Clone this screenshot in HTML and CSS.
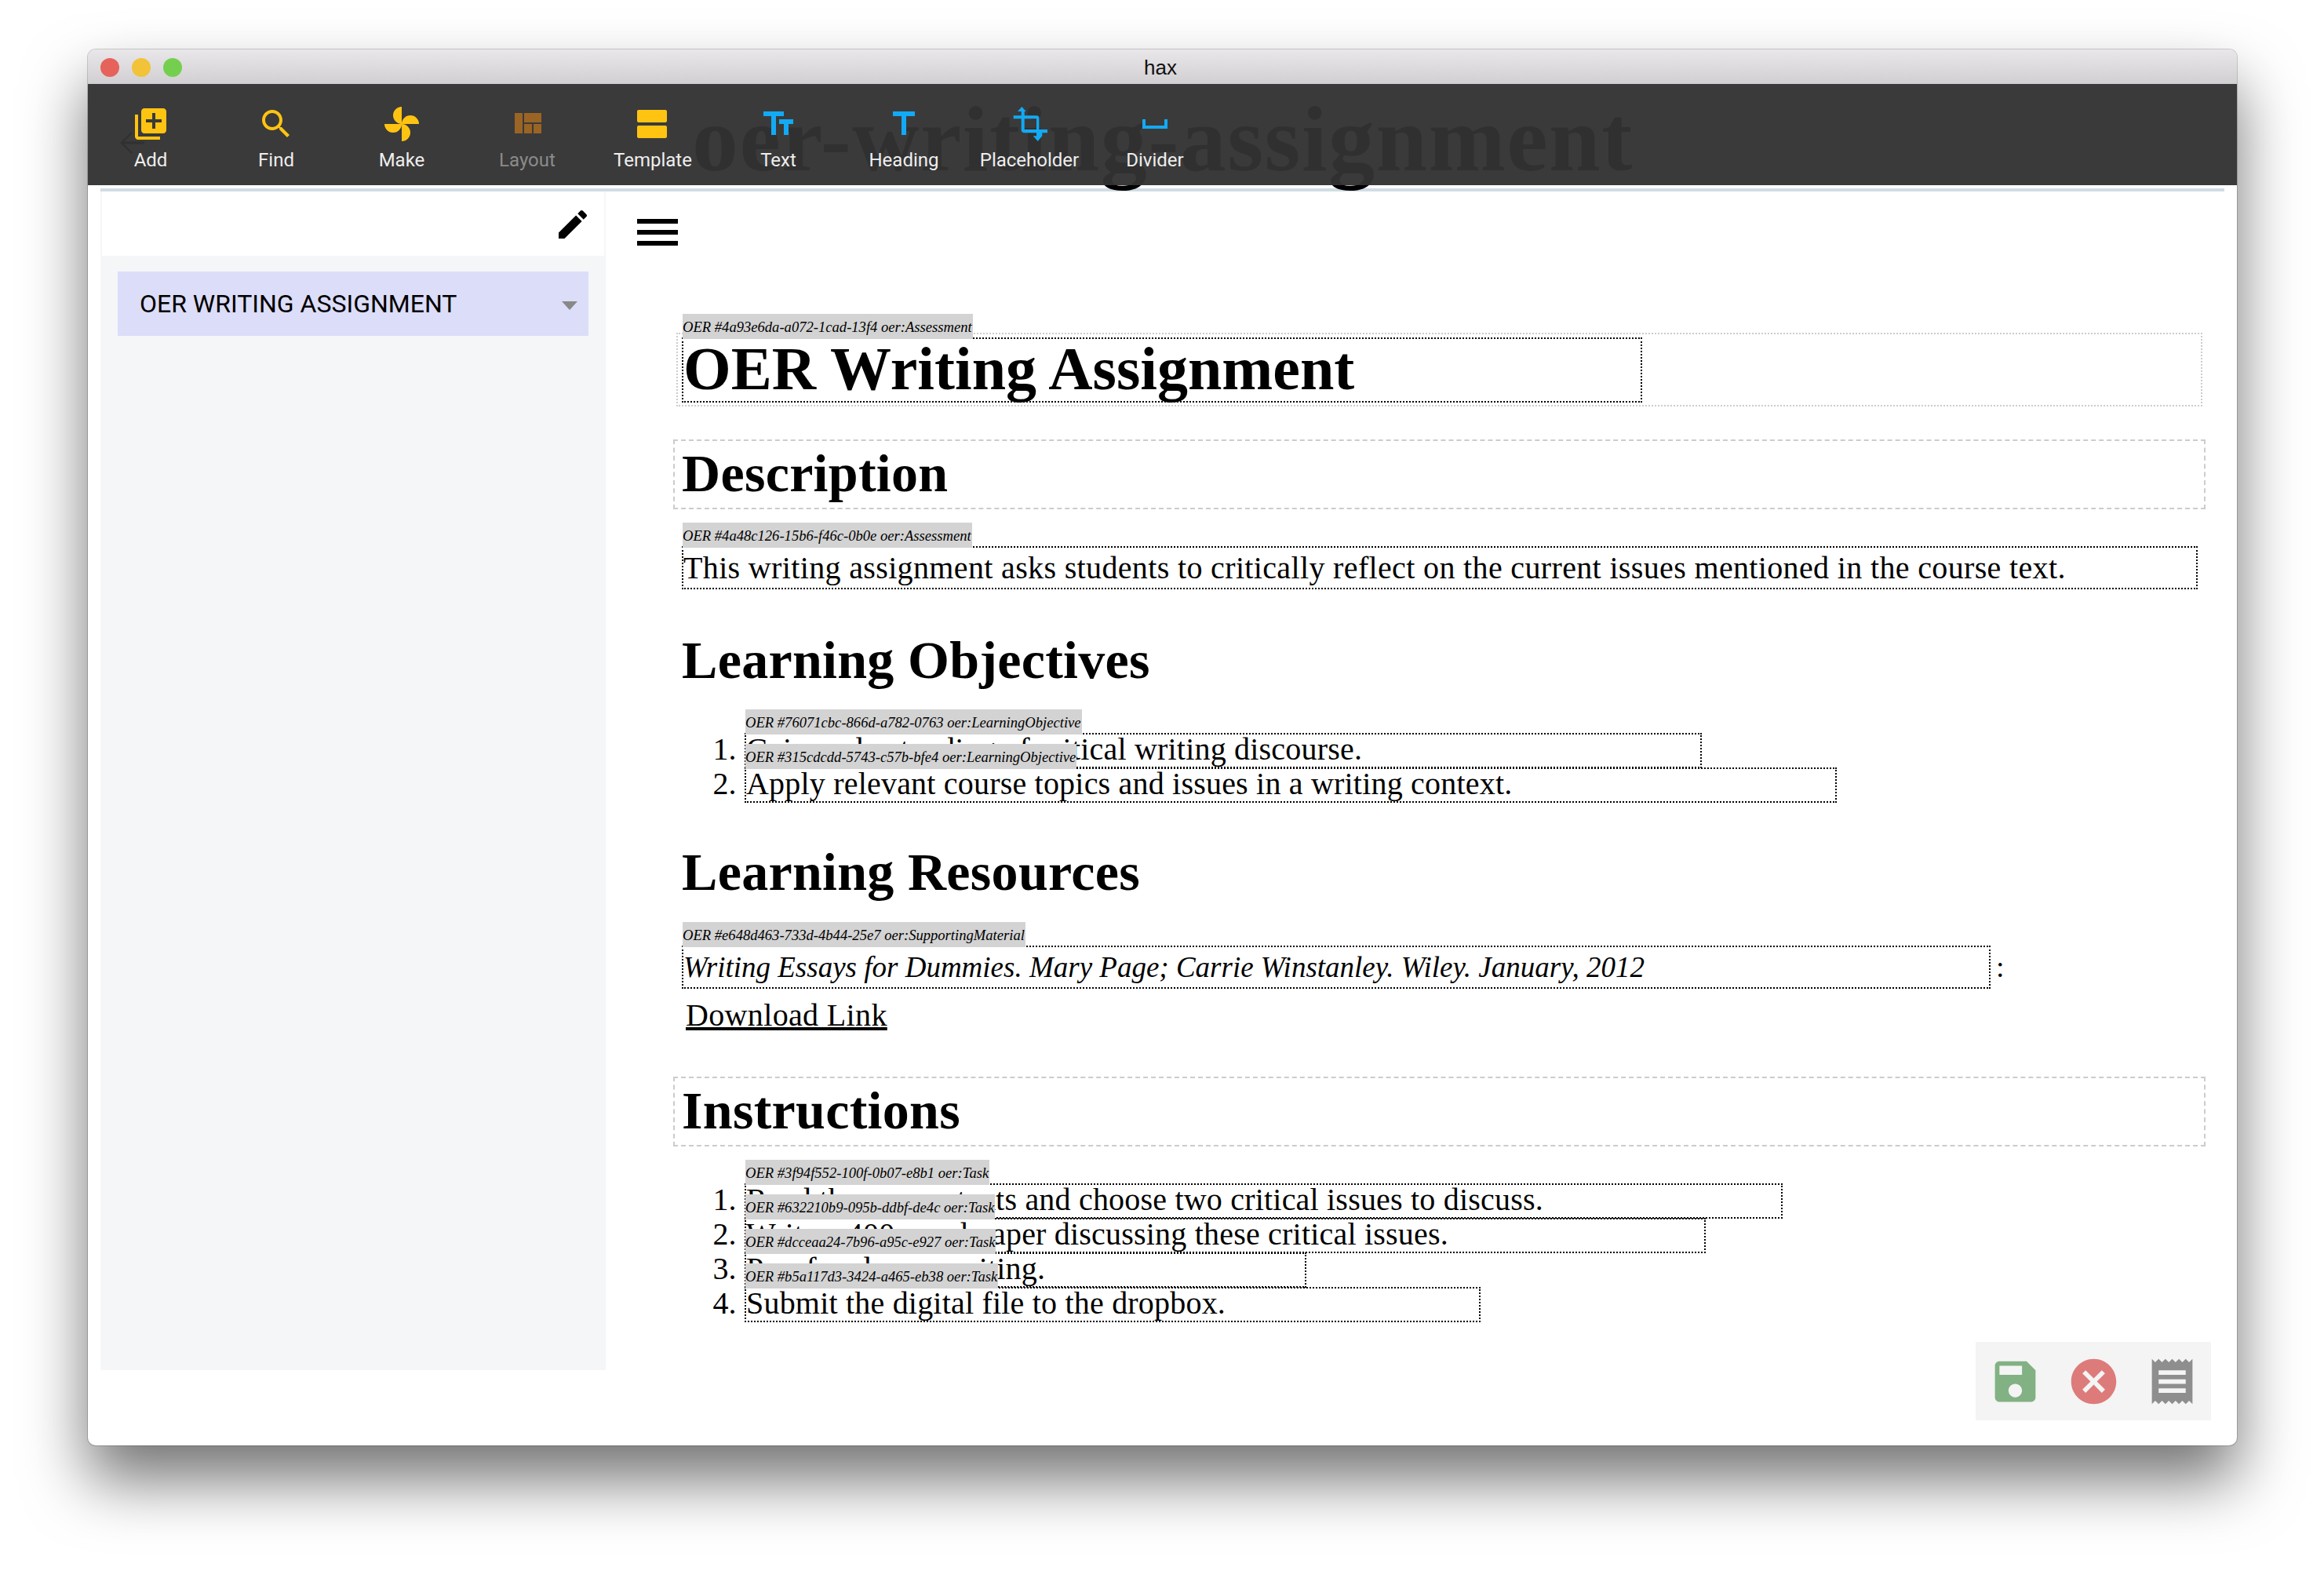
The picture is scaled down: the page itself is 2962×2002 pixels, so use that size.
FILE: index.html
```
<!DOCTYPE html>
<html>
<head>
  <meta charset="utf-8">
  <title>hax</title>
  <link rel="stylesheet" href="styles.css">
</head>
<body>
  <div class="window">
    <div class="titlebar">
      <div class="lights">
        <span class="light red"></span>
        <span class="light yellow"></span>
        <span class="light green"></span>
      </div>
      <span class="window-title">hax</span>
    </div>

    <!-- page title sits behind the translucent toolbar -->
    <div class="back-title">oer-writing-assignment</div>
    <svg class="back-arrow" viewBox="0 0 32 32"><path d="M32 14.5H6L17 3.5 15.5 2 1 16l14.5 14 1.5-1.5-11-11h26z"/></svg>

    <div class="toolbar">
      <div class="tool yellow-icon">
        <svg viewBox="0 0 24 24"><path d="M4 6H2v14c0 1.1.9 2 2 2h14v-2H4V6zm16-4H8c-1.1 0-2 .9-2 2v12c0 1.1.9 2 2 2h12c1.1 0 2-.9 2-2V4c0-1.1-.9-2-2-2zm-1 9h-4v4h-2v-4H9V9h4V5h2v4h4v2z"/></svg>
        <span>Add</span>
      </div>
      <div class="tool yellow-icon">
        <svg viewBox="0 0 24 24"><path d="M15.5 14h-.79l-.28-.27C15.41 12.59 16 11.11 16 9.5 16 5.91 13.09 3 9.5 3S3 5.91 3 9.5 5.91 16 9.5 16c1.61 0 3.09-.59 4.23-1.57l.27.28v.79l5 4.99L20.49 19l-4.99-5zm-6 0C7.01 14 5 11.99 5 9.5S7.01 5 9.5 5 14 7.01 14 9.5 11.99 14 9.5 14z"/></svg>
        <span>Find</span>
      </div>
      <div class="tool yellow-icon">
        <svg viewBox="0 0 48 48"><path d="M24 24V2A11 11 0 0 0 24 24zM24 24H46A11 11 0 0 0 24 24zM24 24V46A11 11 0 0 0 24 24zM24 24H2A11 11 0 0 0 24 24z"/></svg>
        <span>Make</span>
      </div>
      <div class="tool yellow-icon disabled">
        <svg viewBox="0 0 24 24"><path d="M10 18h5v-6h-5v6zm-6 0h5V5H4v13zm12 0h5v-6h-5v6zM10 5v6h11V5H10z"/></svg>
        <span>Layout</span>
      </div>
      <div class="tool yellow-icon">
        <svg viewBox="0 0 24 24"><path d="M20 13H3c-.55 0-1 .45-1 1v6c0 .55.45 1 1 1h17c.55 0 1-.45 1-1v-6c0-.55-.45-1-1-1zm0-10H3c-.55 0-1 .45-1 1v6c0 .55.45 1 1 1h17c.55 0 1-.45 1-1V4c0-.55-.45-1-1-1z"/></svg>
        <span>Template</span>
      </div>
      <div class="tool blue-icon">
        <svg viewBox="0 0 48 48"><path d="M5 8h26v6H21v24h-6V14H5zM25 18h18v6h-6v14h-6V24h-6z"/></svg>
        <span>Text</span>
      </div>
      <div class="tool blue-icon">
        <svg viewBox="0 0 24 24"><path d="M5 4v3h5.5v12h3V7H19V4z"/></svg>
        <span>Heading</span>
      </div>
      <div class="tool blue-icon">
        <svg viewBox="0 0 48 48"><path d="M14.300 2l5.400 6h-2v5.300H33a3.300 3.300 0 0 1 3.300 3.300V31H47v4.300H40.300v4h-0l-5.600 6.700-6-6.700h4.300V35.300H17.700a4 4 0 0 1-4-4V17.300H3.700v-4h10V8H9zM17.700 17.300V31H33V17.300z"/></svg>
        <span>Placeholder</span>
      </div>
      <div class="tool blue-icon">
        <svg viewBox="0 0 24 24"><path d="M18 9v4H6V9H4v6h16V9z"/></svg>
        <span>Divider</span>
      </div>
    </div>

    <div class="rule"></div>

    <div class="workspace">
      <div class="sidebar">
        <div class="sidebar-head">
          <svg class="pencil" viewBox="0 0 24 24"><path d="M3 17.250V21h3.750L17.810 9.940l-3.750-3.750L3 17.250zM20.710 7.040c.39-.39.39-1.020 0-1.410l-2.340-2.340c-.39-.39-1.020-.39-1.410 0l-1.830 1.830 3.750 3.750 1.830-1.830z"/></svg>
        </div>
        <div class="nav-item">
          <span>OER WRITING ASSIGNMENT</span>
          <span class="caret"></span>
        </div>
      </div>

      <div class="main">
        <div class="hamburger"><span></span><span></span><span></span></div>

        <div class="doc">
          <div class="title-wrap">
            <h1 class="oer-box title-box">
              <span class="oer-tag">OER #4a93e6da-a072-1cad-13f4 oer:Assessment</span>
              OER Writing Assignment
            </h1>
          </div>

          <h2 class="dashed">Description</h2>

          <p class="oer-box para-box">
            <span class="oer-tag">OER #4a48c126-15b6-f46c-0b0e oer:Assessment</span>
            This writing assignment asks students to critically reflect on the current issues mentioned in the course text.
          </p>

          <h2 class="plain objectives">Learning Objectives</h2>

          <ol class="oer-list objectives-list">
            <li><div class="oer-box item-box w1"><span class="oer-tag">OER #76071cbc-866d-a782-0763 oer:LearningObjective</span>Gain understanding of critical writing discourse.</div></li>
            <li><div class="oer-box item-box w2"><span class="oer-tag">OER #315cdcdd-5743-c57b-bfe4 oer:LearningObjective</span>Apply relevant course topics and issues in a writing context.</div></li>
          </ol>

          <h2 class="plain resources">Learning Resources</h2>

          <div class="resource-row">
            <div class="oer-box para-box book-box">
              <span class="oer-tag">OER #e648d463-733d-4b44-25e7 oer:SupportingMaterial</span>
              <em>Writing Essays for Dummies. Mary Page; Carrie Winstanley. Wiley. January, 2012</em>
            </div>
            <span class="colon">:</span>
          </div>
          <a class="download" href="#">Download Link</a>

          <h2 class="dashed instructions">Instructions</h2>

          <ol class="oer-list tasks-list">
            <li><div class="oer-box item-box w3"><span class="oer-tag">OER #3f94f552-100f-0b07-e8b1 oer:Task</span>Read the course texts and choose two critical issues to discuss.</div></li>
            <li><div class="oer-box item-box w4"><span class="oer-tag">OER #632210b9-095b-ddbf-de4c oer:Task</span>Write a 400 word paper discussing these critical issues.</div></li>
            <li><div class="oer-box item-box w5"><span class="oer-tag">OER #dcceaa24-7b96-a95c-e927 oer:Task</span>Proofread your writing.</div></li>
            <li><div class="oer-box item-box w6"><span class="oer-tag">OER #b5a117d3-3424-a465-eb38 oer:Task</span>Submit the digital file to the dropbox.</div></li>
          </ol>
        </div>
      </div>
    </div>

    <div class="actions">
      <svg class="save" viewBox="0 0 24 24"><path d="M17 3H5c-1.110 0-2 .9-2 2v14c0 1.100.89 2 2 2h14c1.100 0 2-.9 2-2V7l-4-4zm-5 16c-1.660 0-3-1.340-3-3s1.340-3 3-3 3 1.340 3 3-1.340 3-3 3zm3-10H5V5h10v4z"/></svg>
      <svg class="cancel" viewBox="0 0 24 24"><path d="M12 2C6.470 2 2 6.470 2 12s4.470 10 10 10 10-4.470 10-10S17.530 2 12 2zm5 13.590L15.590 17 12 13.410 8.410 17 7 15.590 10.590 12 7 8.410 8.410 7 12 10.590 15.590 7 17 8.410 13.410 12 17 15.590z"/></svg>
      <svg class="source" viewBox="0 0 24 24"><path d="M18 17H6v-2h12v2zm0-4H6v-2h12v2zm0-4H6V7h12v2zM3 22l1.500-1.500L6 22l1.500-1.500L9 22l1.500-1.500L12 22l1.500-1.500L15 22l1.500-1.500L18 22l1.500-1.500L21 22V2l-1.500 1.500L18 2l-1.500 1.500L15 2l-1.500 1.500L12 2l-1.500 1.500L9 2 7.500 3.500 6 2 4.500 3.500 3 2v20z"/></svg>
    </div>
  </div>
</body>
</html>
```

FILE: styles.css
```
html, body {
  margin: 0;
  padding: 0;
  background-color: white;
}

body {
  height: 2002px;
  overflow: hidden;
  font-family: "Liberation Serif", serif;
  color: black;
}

/* Window frame */
.window {
  position: relative;
  box-sizing: border-box;
  width: 2739px;
  height: 1779px;
  margin: 63px 0 0 112px;
  background-color: white;
  border-radius: 10px;
  box-shadow: 0 0 0 1px rgba(0, 0, 0, 0.18), 0 44px 80px rgba(0, 0, 0, 0.55);
  overflow: visible;
}

.titlebar {
  position: relative;
  z-index: 3;
  box-sizing: border-box;
  display: flex;
  align-items: center;
  justify-content: center;
  height: 44px;
  padding: 2px 5px 0 0;
  border-radius: 10px 10px 0 0;
  background: linear-gradient(#e9e7e9, #d1cfd1);
  font-family: "Liberation Sans", sans-serif;
  font-size: 26px;
  color: #111;
}

.lights {
  position: absolute;
  left: 16px;
  top: 11px;
  display: flex;
  gap: 16px;
}

.light {
  width: 24px;
  height: 24px;
  border-radius: 50%;
}

.red { background-color: #e5635b; }
.yellow { background-color: #f2c238; }
.green { background-color: #75cf4e; }

.back-title {
  position: absolute;
  left: 770px;
  top: 56px;
  font-size: 118px;
  line-height: 118px;
  font-weight: bold;
  letter-spacing: 1.4px;
  white-space: nowrap;
}

.back-arrow {
  position: absolute;
  left: 40px;
  top: 103px;
  width: 32px;
  height: 32px;
}

/* Toolbar */
.toolbar {
  position: relative;
  z-index: 2;
  display: flex;
  height: 129px;
  background-color: rgba(50, 50, 50, 0.96);
}

.tool {
  display: flex;
  flex-direction: column;
  align-items: center;
  width: 160px;
  padding-top: 27px;
  font-family: Roboto, sans-serif;
  font-size: 24px;
  line-height: 28px;
  color: #eee;
}

.tool svg {
  width: 48px;
  height: 48px;
  margin-bottom: 8px;
}

.yellow-icon svg { fill: #ffc412; }
.blue-icon svg { fill: #12aaf5; }
.disabled svg { fill: #9a6425; }
.disabled { color: #8b8b8b; }

.rule {
  height: 4px;
  margin: 4px 16px 0;
  background-color: #d1dce4;
}

/* Sidebar + document */
.workspace {
  display: flex;
  padding: 0 16px;
}

.sidebar {
  box-sizing: border-box;
  width: 644px;
  height: 1502px;
  padding: 0 2px;
  background-color: #f5f6f8;
}

.sidebar-head {
  display: flex;
  justify-content: flex-end;
  height: 82px;
  background-color: white;
}

.pencil {
  width: 48px;
  height: 48px;
  margin: 18px 16px 0 0;
}

.nav-item {
  display: flex;
  align-items: center;
  justify-content: space-between;
  height: 82px;
  margin: 20px 20px 0;
  padding: 0 14px 0 28px;
  background-color: #dcddf8;
  font-family: Roboto, sans-serif;
  font-size: 32px;
}

.caret {
  width: 0;
  height: 0;
  margin-top: 4px;
  border-left: 10px solid transparent;
  border-right: 10px solid transparent;
  border-top: 11px solid #888;
}

.main {
  flex: 1;
  min-width: 0;
}

.hamburger {
  display: flex;
  flex-direction: column;
  justify-content: space-between;
  width: 52px;
  height: 34px;
  margin: 35px 0 0 40px;
}

.hamburger span {
  height: 6px;
  background-color: black;
}

.doc {
  width: 1953px;
  margin: 111px 0 0 86px;
  font-size: 40px;
  letter-spacing: 0.35px;
}

/* OER blocks: dotted box with a grey tag hanging over the top edge */
.oer-box {
  position: relative;
  box-sizing: border-box;
  border: 2px dotted black;
  font-weight: normal;
}

.oer-tag {
  position: absolute;
  left: -1px;
  top: -32px;
  height: 32px;
  z-index: 1;
  padding-right: 1px;
  background-color: #d3d3d3;
  font-family: "Liberation Serif", serif;
  font-style: italic;
  font-weight: normal;
  font-size: 18.6px;
  line-height: 33px;
  letter-spacing: 0;
  white-space: nowrap;
}

.title-wrap {
  box-sizing: border-box;
  height: 94px;
  margin: 0 4px;
  padding: 4px 5px;
  border: 2px dotted #ccc;
}

h1.title-box {
  width: 1224px;
  height: 83px;
  margin: 0;
  font-weight: bold;
  font-size: 78px;
  line-height: 76px;
  letter-spacing: 0;
}

h2 {
  margin: 0;
  font-size: 68px;
  font-weight: bold;
  letter-spacing: 0.3px;
}

.dashed {
  box-sizing: border-box;
  height: 89px;
  margin-top: 42px;
  padding-left: 9px;
  border: 2px dashed #ccc;
  line-height: 82px;
}

.plain {
  margin-left: 11px;
  line-height: 70px;
}

.para-box {
  height: 55px;
  margin: 47px 10px 0 11px;
  line-height: 51px;
}

.objectives { margin-top: 55px; }

.oer-list {
  margin: 55px 0 0;
  padding: 0 0 0 91px;
  letter-spacing: 0.2px;
}

.oer-list li {
  height: 44px;
}

.item-box {
  height: 45px;
  line-height: 37px;
}

.w1 { width: 1220px; }
.w2 { width: 1392px; }
.w3 { width: 1323px; }
.w4 { width: 1225px; }
.w5 { width: 716px; }
.w6 { width: 938px; }

.resources { margin-top: 57px; }

.resource-row {
  display: flex;
  align-items: baseline;
  gap: 7px;
  margin-top: 59px;
}

.book-box {
  width: 1668px;
  margin: 0 0 0 11px;
  letter-spacing: 0;
  font-size: 37px;
}

.colon { font-size: 38px; }

.download {
  display: block;
  width: fit-content;
  margin: 12px 0 0 16px;
  color: black;
  line-height: 44px;
}

.instructions { margin-top: 56px; }

.tasks-list { margin-top: 44px; }

/* Floating save / cancel / source panel */
.actions {
  position: absolute;
  right: 33px;
  bottom: 32px;
  display: grid;
  grid-template-columns: repeat(3, 100px);
  place-items: center;
  height: 100px;
  background-color: #f4f4f4;
}

.actions svg {
  width: 69px;
  height: 69px;
}

.save { fill: #82b184; }
.cancel { fill: #dd7b7b; }
.source { fill: #8e8e8e; }
```
